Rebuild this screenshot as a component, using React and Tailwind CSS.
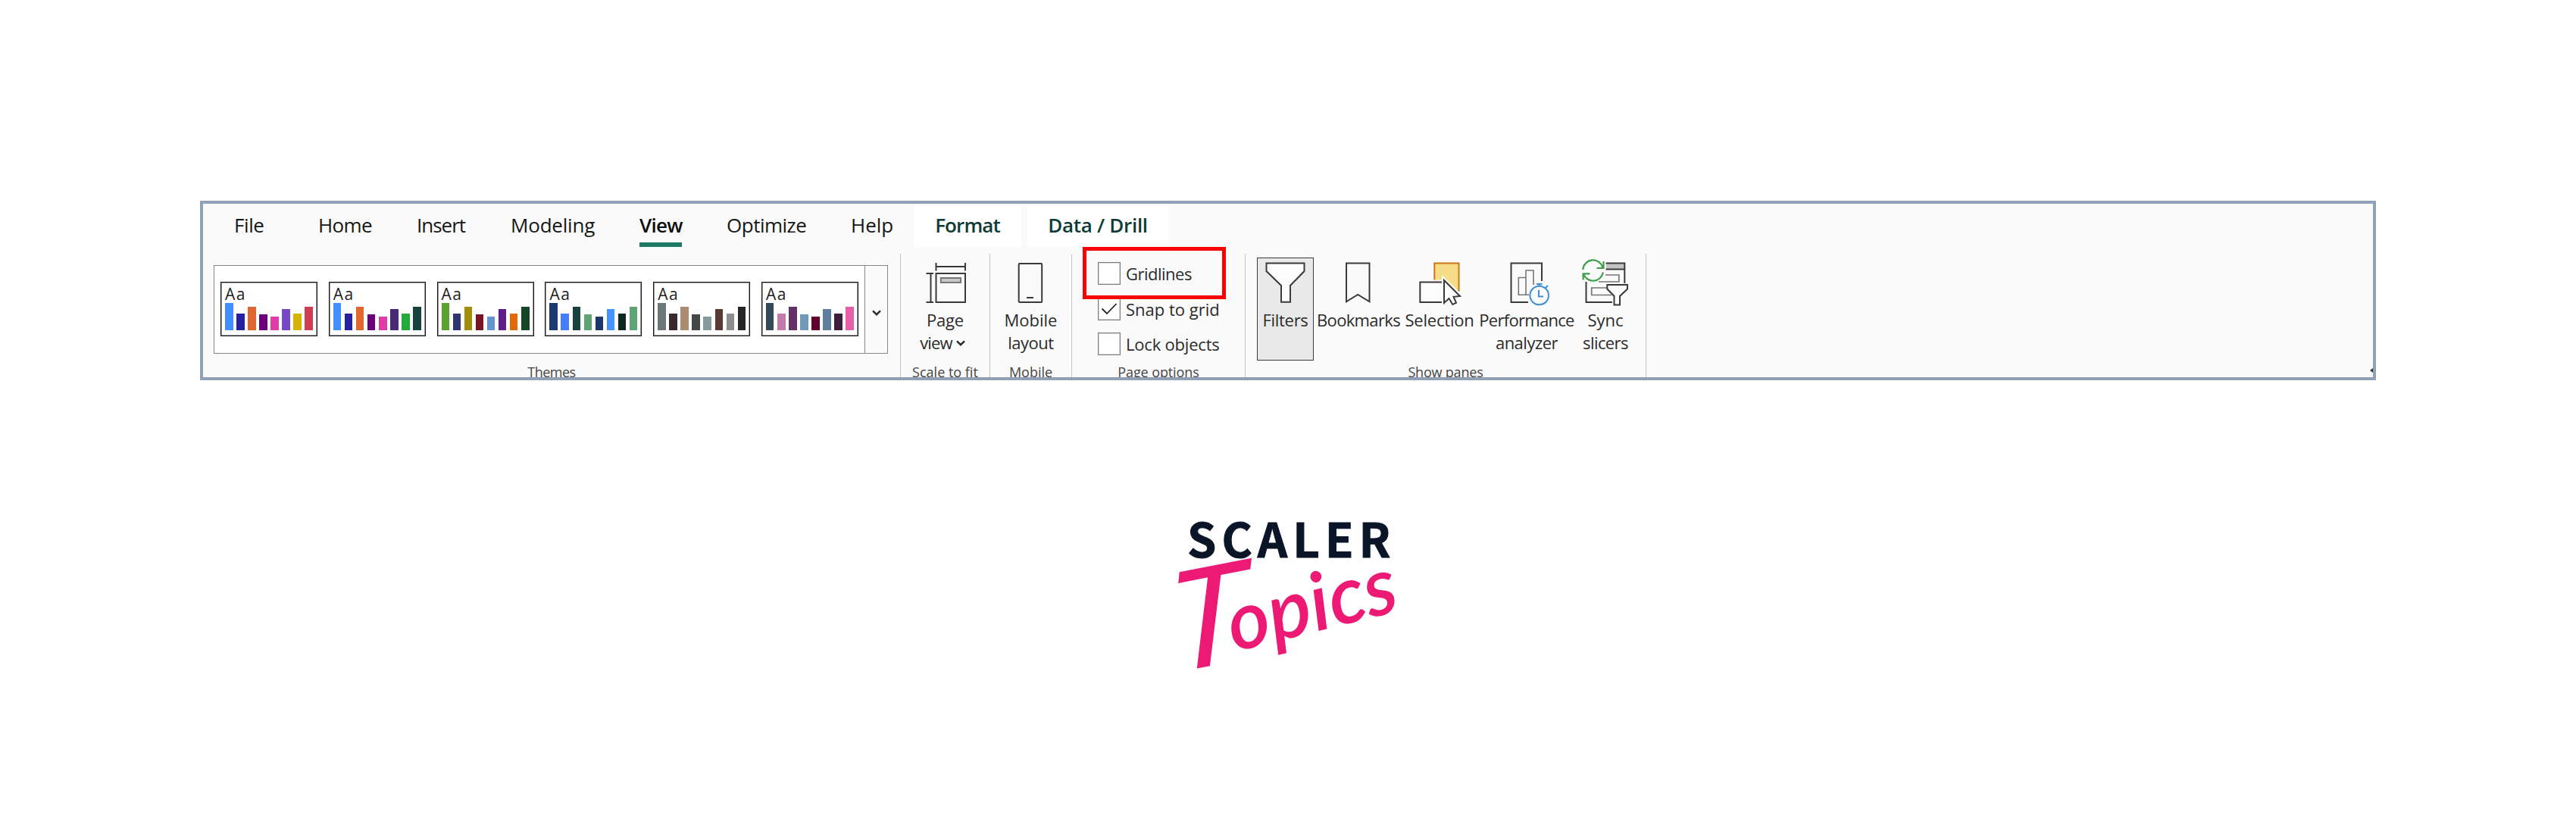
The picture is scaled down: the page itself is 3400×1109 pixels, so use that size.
import React from "react";

const INK = "#3a3a3a";

const THEMES = [
  ["#4290ff", "#2620a2", "#e0662f", "#6b007b", "#e03ca8", "#7549c6", "#d4b406", "#d23c50"],
  ["#4290ff", "#2620a2", "#e0662f", "#6b007b", "#e03ca8", "#482a76", "#22ab39", "#16443d"],
  ["#5ba32f", "#30356f", "#a58d0c", "#761523", "#6495d2", "#641b8b", "#e26b08", "#154626"],
  ["#1b3a70", "#467dff", "#18433c", "#5da671", "#1b3668", "#4593ff", "#0c2620", "#5da671"],
  ["#6d7779", "#37292c", "#ab8c6e", "#434847", "#87999b", "#593a32", "#8d8d8b", "#252727"],
  ["#354a58", "#c47ba9", "#623165", "#7299b7", "#63002d", "#607f9e", "#3e1c3e", "#e85fa9"],
];
const BAR_HEIGHTS = [36, 22.5, 31.5, 21, 18, 28.5, 22.5, 31.5];

function ThemeCard({ colors }) {
  return (
    <div className="flex h-[72px] w-[128px] flex-col justify-between border border-[#161616] bg-white pt-[4px] pr-[5px] pb-[7px] pl-[5px] shadow-[inset_0_0_0_1px_#00000066]">
      <div className="h-[22px] text-[21px] leading-[22px] tracking-[1.5px] text-[#1d1d1d]">Aa</div>
      <div className="flex h-[36px] items-end justify-between">
        {colors.map((c, i) => (
          <div key={i} className="w-[10.5px]" style={{ background: c, height: BAR_HEIGHTS[i] }} />
        ))}
      </div>
    </div>
  );
}

function Chevron({ className }) {
  return (
    <svg className={className} width="12" height="8" viewBox="0 0 12 8" fill="none" stroke="#2b2b2b" strokeWidth="2.4">
      <path d="M1 1.3 6 6.2 11 1.3" />
    </svg>
  );
}

function Icon({ x, w, children }) {
  return (
    <svg className="block h-[67px] shrink-0" width={w} height="67" viewBox={`${x} 340 ${w} 67`} fill="none" stroke={INK} strokeWidth="2">
      {children}
    </svg>
  );
}

function Group({ className, label, tracking = "", children }) {
  return (
    <div className={"flex h-[163px] shrink-0 flex-col border-r border-[#c4c4c4] " + className}>
      <div className="h-[144px] shrink-0">{children}</div>
      <div className={"shrink-0 text-center text-[18px] leading-[24px] whitespace-nowrap text-[#454545] " + tracking}>{label}</div>
    </div>
  );
}

function CheckRow({ label, checked, tracking }) {
  return (
    <div className="flex h-[30px] items-center">
      <div className="flex size-[30px] items-center justify-center border border-[#7c7c7c] bg-white shadow-[inset_0_0_0_1px_#00000026]">
        {checked && (
          <svg width="22" height="18" viewBox="0 0 22 18" fill="none" stroke="#222" strokeWidth="1.8">
            <path d="M1.5 8.5 8 15 20.5 2" />
          </svg>
        )}
      </div>
      <span className={"ml-[7px] leading-[30px] whitespace-nowrap " + tracking}>{label}</span>
    </div>
  );
}

function PaneButton({ className, children }) {
  return <div className={"flex h-[136px] shrink-0 flex-col items-center text-center whitespace-nowrap " + className}>{children}</div>;
}

function Tabs() {
  return (
    <div className="flex h-[66px] pt-[2px] pl-[41px] text-[26px] leading-[36px] whitespace-nowrap text-[#161616]">
      <div className="w-[111px] pt-[8px] tracking-[-0.4px]">File</div>
      <div className="w-[130px] pt-[8px] tracking-[-0.6px]">Home</div>
      <div className="w-[124px] pt-[8px] tracking-[-1px]">Insert</div>
      <div className="w-[170px] pt-[8px] tracking-[-0.2px]">Modeling</div>
      <div className="w-[115px] pt-[8px]">
        <div className="h-[41px] w-[57px] font-semibold tracking-[-0.7px] text-[#0c0c0c]">View</div>
        <div className="h-[6px] w-[56px] bg-[#1c7b65]" />
      </div>
      <div className="w-[164px] pt-[8px] tracking-[-0.5px]">Optimize</div>
      <div className="w-[83px] pt-[8px]">Help</div>
      <div className="h-[55px] w-[142px] bg-white pt-[8px] text-center font-semibold tracking-[-0.9px] text-[#0d3b36]">Format</div>
      <div className="ml-[8px] h-[55px] w-[186px] bg-white pt-[8px] text-center font-semibold tracking-[-0.3px] text-[#0d3b36]">Data / Drill</div>
    </div>
  );
}

function Ribbon() {
  return (
    <div className="relative h-[237px] w-[2872px] overflow-hidden border-4 border-[#90a1b6] bg-[#fafafa]">
      <Tabs />
      <div className="flex text-[22px] leading-[30px] text-[#2b2b2b]">
        <Group className="w-[921px]" label="Themes" tracking="tracking-[-0.5px]">
          <div className="mt-[15px] ml-[14px] flex h-[117px] w-[890px] border border-[#858585] bg-white">
            <div className="flex w-[858px] items-center gap-[14.8px] pb-[1px] pl-[8px]">
              {THEMES.map((c, i) => (
                <ThemeCard key={i} colors={c} />
              ))}
            </div>
            <div className="flex flex-1 items-center justify-center border-l border-[#858585] bg-[#fafafa] pt-[9px]">
              <Chevron className="" />
            </div>
          </div>
        </Group>

        <Group className="w-[118px]" label="Scale to fit">
          <div className="flex flex-col items-center pt-[5px]">
            <Icon x={1218} w={58}>
              <path d="M1234.5 352H1273M1234.5 347V357.5M1273 347V357.5M1227.5 361V399M1221.5 361H1231M1221.5 399H1231" />
              <rect x="1234.5" y="361" width="38.5" height="38" />
              <rect x="1240.8" y="367" width="26.2" height="6" fill="#c8c8c8" stroke="#777" />
            </Icon>
            <div className="tracking-[-0.2px]">Page</div>
            <div className="mr-[7px] flex items-center">
              <span className="tracking-[-0.8px]">view</span>
              <Chevron className="mt-[2px] ml-[5px]" />
            </div>
          </div>
        </Group>

        <Group className="w-[108px]" label="Mobile">
          <div className="flex flex-col items-center pt-[5px]">
            <Icon x={1331} w={59}>
              <rect x="1344.7" y="348" width="30.5" height="51" rx="1" />
              <path d="M1355 393H1364" />
            </Icon>
            <div>Mobile</div>
            <div className="tracking-[-0.5px]">layout</div>
          </div>
        </Group>

        <Group className="w-[229px]" label="Page options" tracking="tracking-[-0.1px]">
          <div className="flex flex-col gap-[16.6px] pt-[11px] pl-[34px]">
            <CheckRow label="Gridlines" tracking="tracking-[-0.5px]" />
            <CheckRow label="Snap to grid" tracking="" checked />
            <CheckRow label="Lock objects" tracking="tracking-[-0.2px]" />
          </div>
        </Group>

        <Group className="w-[529px]" label="Show panes" tracking="tracking-[-0.2px]">
          <div className="flex pt-[5px] pl-[15px]">
            <PaneButton className="w-[75px] border border-[#3a3a3a] bg-[#e9e9e9]">
              <div className="-mt-px">
                <Icon x={1667} w={58}>
                  <path fill="#fcfcfc" d="M1670.5 347.5H1720.5V358L1702 377V398.8H1690V377L1670.5 358Z" />
                </Icon>
              </div>
              <div className="tracking-[-0.3px]">Filters</div>
            </PaneButton>
            <PaneButton className="w-[118px]">
              <Icon x={1764} w={58}>
                <path d="M1777 347.5H1807.5V398.3L1792.2 389L1777 398.3Z" />
              </Icon>
              <div className="tracking-[-0.65px]">Bookmarks</div>
            </PaneButton>
            <PaneButton className="w-[96px]">
              <Icon x={1870} w={60}>
                <rect x="1893.3" y="347.5" width="32.2" height="37" fill="#f5dd88" stroke="#ce7419" />
                <path fill="#fafafa" stroke="none" d="M1891 369.5H1906V385H1928V404H1891Z" />
                <path fill="#fcfcfc" d="M1904 372.5H1874.3V399H1904" />
                <path stroke="#fafafa" strokeWidth="6" fill="#fafafa" d="M1906 370V400L1912.5 394L1917.3 402.3L1922.5 399.8L1919 391.8L1927.5 391Z" />
                <path fill="#fcfcfc" strokeWidth="2" d="M1906 370V400L1912.5 394L1917.3 402L1922 399.8L1918.5 391.8L1927 391Z" />
              </Icon>
              <div className="tracking-[-0.2px]">Selection</div>
            </PaneButton>
            <PaneButton className="w-[134px]">
              <Icon x={1985} w={60}>
                <path d="M2035 371V347.5H1994.5V399H2017" />
                <path stroke="#777" strokeWidth="1.6" d="M2014 389.3H2004.3V366.5H2014M2014 389.3V357H2024V376M2014 389.3H2018" />
                <circle cx="2031.7" cy="390" r="12.3" stroke="#3f8fd4" strokeWidth="2" />
                <path stroke="#3f8fd4" strokeWidth="2" d="M2028 375H2035.5M2031.7 375V378M2039.5 380.5L2043 377M2031 383V391.5H2037" />
              </Icon>
              <div className="tracking-[-0.7px]">Performance</div>
              <div className="tracking-[-0.5px]">analyzer</div>
            </PaneButton>
            <PaneButton className="w-[74px]">
              <Icon x={2087} w={64}>
                <path fill="#c3c3c3" stroke="none" d="M2120 347.5H2144.5V355.5H2120Z" />
                <path d="M2119.5 347.5H2144.3V374M2119.5 355.5H2144.3M2093.5 372V399H2128" />
                <path stroke="#777" strokeWidth="1.7" d="M2119 363H2136.8V372H2110M2122 380H2100.7V389.5H2127" />
                <path fill="#fcfcfc" strokeWidth="2" d="M2121.3 376H2148V381.5L2138 391V402.5H2130.5V391L2121.3 381.5Z" />
                <g stroke="#3f9e4a" strokeWidth="2.2">
                  <path d="M2089.3 356A13.3 13.3 0 0 1 2115.5 353.5M2116.5 345V354H2107.5" />
                  <path d="M2115.8 359.5A13.3 13.3 0 0 1 2090 361.5M2089.6 369.5V361.3H2098.5" />
                </g>
              </Icon>
              <div>Sync</div>
              <div className="tracking-[-0.6px]">slicers</div>
            </PaneButton>
          </div>
        </Group>
      </div>
      {/* Highlight around the Gridlines option */}
      <div className="absolute top-[57px] left-[1161px] h-[69px] w-[189px] border-5 border-[#fb0000]" />
      <svg className="absolute right-0 bottom-[6px]" width="4" height="6" viewBox="0 0 4 6">
        <path d="M4 0V6L0 3Z" fill="#333" />
      </svg>
    </div>
  );
}

function Logo() {
  return (
    <div className="mt-[178px] ml-[1567px] w-[300px]">
      <div className="h-[60px] text-[61.5px] leading-[60px] font-bold tracking-[7px] whitespace-nowrap text-[#0a1528] [-webkit-text-stroke:1px_#0a1528] [font-family:'Noto_Sans_CJK_SC',sans-serif]">
        SCALER
      </div>
      <div className="-ml-[22px] flex h-[180px] items-start whitespace-nowrap text-[#ec1975] italic [font-family:Lato,cursive]">
        <span className="-mt-[24px] w-[74px] origin-center -skew-y-[11deg] text-[184px] leading-[190px]">T</span>
        <span className="mt-[26px] origin-left -rotate-[14deg] text-[106px] leading-[110px] font-semibold">opics</span>
      </div>
    </div>
  );
}

export default function App() {
  return (
    <div className="h-[1109px] w-[3400px] overflow-hidden bg-white pt-[265px] [font-family:'Open_Sans',sans-serif]">
      <div className="ml-[264px]">
        <Ribbon />
      </div>
      <Logo />
    </div>
  );
}
